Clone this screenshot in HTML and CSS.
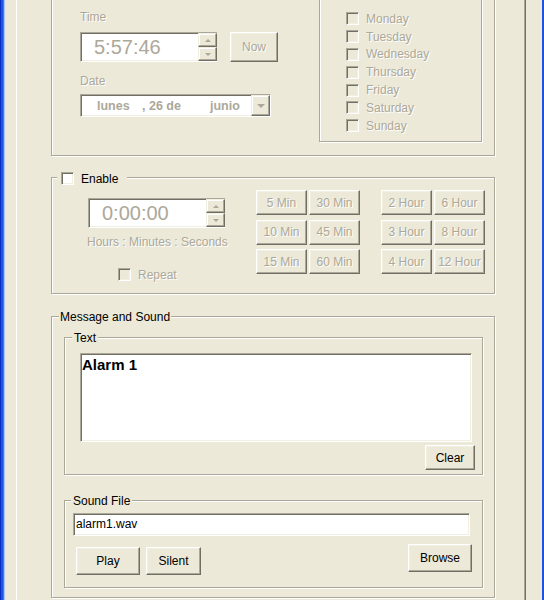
FILE: index.html
```html
<!DOCTYPE html>
<html lang="en">
<head>
<meta charset="utf-8">
<title>Alarm</title>
<link rel="stylesheet" href="styles.css">
</head>
<body>
<div class="window">
  <div class="page">

    <!-- date / time and weekday selection -->
    <div class="group schedule">
      <div class="when">
        <div class="label dim">Time</div>
        <div class="time-row">
          <div class="field spin-field">
            <span class="big-value">5:57:46</span>
            <div class="spin">
              <span class="spin-btn"><i class="arrow up"></i></span>
              <span class="spin-btn"><i class="arrow down"></i></span>
            </div>
          </div>
          <button class="btn dim now" disabled>Now</button>
        </div>
        <div class="label dim date-label">Date</div>
        <div class="field combo">
          <span class="part weekday">lunes</span>
          <span class="part day">, 26 de</span>
          <span class="part month">junio</span>
          <span class="drop"><i class="arrow drop-arrow"></i></span>
        </div>
      </div>
      <div class="group days">
        <label class="check-row dim"><span class="check off"></span>Monday</label>
        <label class="check-row dim"><span class="check off"></span>Tuesday</label>
        <label class="check-row dim"><span class="check off"></span>Wednesday</label>
        <label class="check-row dim"><span class="check off"></span>Thursday</label>
        <label class="check-row dim"><span class="check off"></span>Friday</label>
        <label class="check-row dim"><span class="check off"></span>Saturday</label>
        <label class="check-row dim"><span class="check off"></span>Sunday</label>
      </div>
    </div>

    <!-- countdown timer -->
    <div class="group countdown">
      <span class="legend legend-check"><span class="check"></span>Enable</span>
      <div class="countdown-body">
        <div class="timer">
          <div class="field spin-field">
            <span class="big-value">0:00:00</span>
            <div class="spin">
              <span class="spin-btn"><i class="arrow up"></i></span>
              <span class="spin-btn"><i class="arrow down"></i></span>
            </div>
          </div>
          <div class="hint dim">Hours : Minutes : Seconds</div>
          <label class="repeat dim"><span class="check off"></span>Repeat</label>
        </div>
        <div class="presets">
          <div class="preset-grid">
            <button class="btn dim" disabled>5 Min</button>
            <button class="btn dim" disabled>30 Min</button>
            <button class="btn dim" disabled>10 Min</button>
            <button class="btn dim" disabled>45 Min</button>
            <button class="btn dim" disabled>15 Min</button>
            <button class="btn dim" disabled>60 Min</button>
          </div>
          <div class="preset-grid">
            <button class="btn dim" disabled>2 Hour</button>
            <button class="btn dim" disabled>6 Hour</button>
            <button class="btn dim" disabled>3 Hour</button>
            <button class="btn dim" disabled>8 Hour</button>
            <button class="btn dim" disabled>4 Hour</button>
            <button class="btn dim" disabled>12 Hour</button>
          </div>
        </div>
      </div>
    </div>

    <!-- message text and sound file -->
    <div class="group message">
      <span class="legend legend-message">Message and Sound</span>
      <div class="group text-box">
        <span class="legend legend-text">Text</span>
        <div class="field memo">Alarm 1</div>
        <div class="text-actions"><button class="btn clear">Clear</button></div>
      </div>
      <div class="group sound-box">
        <span class="legend legend-sound">Sound File</span>
        <div class="field file">alarm1.wav</div>
        <div class="sound-actions">
          <button class="btn play">Play</button>
          <button class="btn silent">Silent</button>
          <button class="btn browse">Browse</button>
        </div>
      </div>
    </div>

  </div>
</div>
</body>
</html>
```
FILE: styles.css
```css
* { box-sizing: border-box; }

html, body {
  margin: 0;
  height: 100%;
}

body {
  font: 12px/14px "Liberation Sans", Arial, sans-serif;
  color: #000;
  background: #ECE9D8;
  overflow: hidden;
}

/* window frame with the blue side borders */
.window {
  height: 600px;
  display: flex;
  align-items: flex-start;
  overflow: hidden;
  background:
    linear-gradient(to right, #0b2cbd 0 1px, #1b57e3 1px 3px, #3d7bf0 3px 4px, #a8c4f2 4px 5px, transparent 5px),
    linear-gradient(to left, #1d52dc 0 2px, transparent 2px),
    #ECE9D8;
}

/* property page panel */
.page {
  margin: -40px 0 0 16px;
  width: 510px;
  height: 700px;
  flex: none;
  border-left: 1px solid #fff;
  border-right: 1px solid #716F64;
  box-shadow: inset -1px 0 0 #ACA899;
  padding: 14px 0 0 34px;
}

/* etched group box */
.group {
  position: relative;
  border: 1px solid #ACA899;
  box-shadow: inset 1px 1px 0 #fff, 1px 1px 0 #fff;
}

.legend {
  position: absolute;
  top: -7px;
  left: 5px;
  padding: 0 2px;
  line-height: 14px;
  background: #ECE9D8;
  white-space: nowrap;
}

.dim {
  color: #ACA899;
  text-shadow: 1px 1px 0 #fff;
}

/* sunken edit field */
.field {
  background: #fff;
  border: 1px solid;
  border-color: #ACA899 #fff #fff #ACA899;
  box-shadow: inset 1px 1px 0 #716F64, inset -1px -1px 0 #F1EFE2;
}

/* raised push button */
.btn {
  font: inherit;
  color: #000;
  padding: 0;
  background: #ECE9D8;
  border: 1px solid;
  border-color: #fff #716F64 #716F64 #fff;
  box-shadow: inset -1px -1px 0 #ACA899, inset 1px 1px 0 #F1EFE2;
}

.btn.dim { color: #ACA899; }

/* check box */
.check {
  flex: none;
  width: 13px;
  height: 13px;
  margin-right: 7px;
  background: #fff;
  border: 1px solid;
  border-color: #ACA899 #fff #fff #ACA899;
  box-shadow: inset 1px 1px 0 #716F64, inset -1px -1px 0 #F1EFE2;
}

.check.off { background: #ECE9D8; }

/* up/down arrows */
.arrow {
  display: block;
  width: 0;
  height: 0;
  border-left: 3px solid transparent;
  border-right: 3px solid transparent;
}

.arrow.up { border-bottom: 3px solid #ACA899; }
.arrow.down { border-top: 3px solid #ACA899; }

.arrow.drop-arrow {
  border-left-width: 4px;
  border-right-width: 4px;
  border-top: 4px solid #ACA899;
}

/* ---- schedule ---- */
.schedule {
  width: 444px;
  height: 182px;
  display: flex;
  padding-left: 28px;
}

.when {
  width: 239px;
  flex: none;
  padding-top: 35px;
}

.label { height: 14px; }

.time-row {
  display: flex;
  gap: 13px;
  margin-top: 8px;
}

.spin-field {
  width: 137px;
  height: 30px;
  display: flex;
  align-items: center;
  padding-left: 13px;
  border-right: 0;
}

.big-value {
  font-size: 20px;
  line-height: 24px;
  color: #ACA899;
}

.spin {
  margin-left: auto;
  align-self: stretch;
  display: flex;
  flex-direction: column;
}

.spin-btn {
  width: 19px;
  height: 14px;
  display: flex;
  align-items: center;
  justify-content: center;
  background: #ECE9D8;
  border: 1px solid;
  border-color: #F1EFE2 #716F64 #716F64 #F1EFE2;
  box-shadow: inset -1px -1px 0 #ACA899, inset 1px 1px 0 #fff;
}

.now {
  width: 48px;
  height: 30px;
}

.date-label { margin-top: 12px; }

.combo {
  margin-top: 6px;
  width: 191px;
  height: 23px;
  display: flex;
  align-items: center;
  padding-left: 16px;
  font-weight: bold;
  font-size: 12.5px;
  color: #ACA899;
}

.part { flex: none; }
.weekday { width: 45px; }
.day { width: 68px; }

.drop {
  margin-left: auto;
  align-self: stretch;
  width: 19px;
  display: flex;
  align-items: center;
  justify-content: center;
  background: #ECE9D8;
  border: 1px solid;
  border-color: #F1EFE2 #716F64 #716F64 #F1EFE2;
  box-shadow: inset -1px -1px 0 #ACA899, inset 1px 1px 0 #fff;
}

.days {
  margin-top: 21px;
  width: 163px;
  height: 146px;
  flex: none;
  padding: 13px 0 0 26px;
}

.check-row {
  display: flex;
  align-items: center;
  height: 17.8px;
}

/* ---- countdown ---- */
.countdown {
  margin-top: 21px;
  width: 444px;
  height: 117px;
}

.legend-check {
  display: flex;
  align-items: center;
  height: 15px;
  padding: 0 9px 0 4px;
}

.countdown-body { display: flex; }

.timer {
  padding: 20px 0 0 36px;
  width: 173px;
  flex: none;
}

.hint {
  margin: 7px 0 0 -1px;
  white-space: nowrap;
}

.repeat {
  display: flex;
  align-items: center;
  height: 14px;
  margin: 18.5px 0 0 30px;
}

.presets {
  display: flex;
  gap: 21px;
  margin: 12px 0 0 31px;
}

.preset-grid {
  display: grid;
  grid-template-columns: 51px 51px;
  grid-auto-rows: 25px;
  column-gap: 2px;
  row-gap: 4.5px;
}

/* ---- message and sound ---- */
.message {
  margin-top: 22px;
  width: 444px;
  height: 282px;
  padding: 20px 0 9px 12px;
}

.legend-message { left: 7px; padding: 0 1px; }

.text-box {
  width: 419px;
  height: 138px;
  padding: 15px 7px 0 15px;
}

.legend-text { left: 7px; }

.memo {
  width: 392px;
  height: 89px;
  padding: 2px 1px;
  font-weight: bold;
  font-size: 15px;
  line-height: 18px;
}

.text-actions {
  display: flex;
  justify-content: flex-end;
  margin-top: 3px;
}

.clear {
  width: 50px;
  height: 25px;
}

.sound-box {
  margin-top: 25px;
  width: 419px;
  height: 88px;
  padding: 12px 10px 0 8px;
}

.legend-sound { left: 6px; }

.file {
  width: 397px;
  height: 23px;
  padding: 3px 2px;
  line-height: 15px;
}

.sound-actions {
  display: flex;
  align-items: flex-start;
  margin-top: 8px;
}

.play, .silent, .browse { height: 28px; }

.play {
  width: 64px;
  margin: 3px 0 0 3px;
}

.silent {
  width: 55px;
  margin: 3px 0 0 6px;
}

.browse {
  width: 64px;
  margin-left: auto;
}
```
